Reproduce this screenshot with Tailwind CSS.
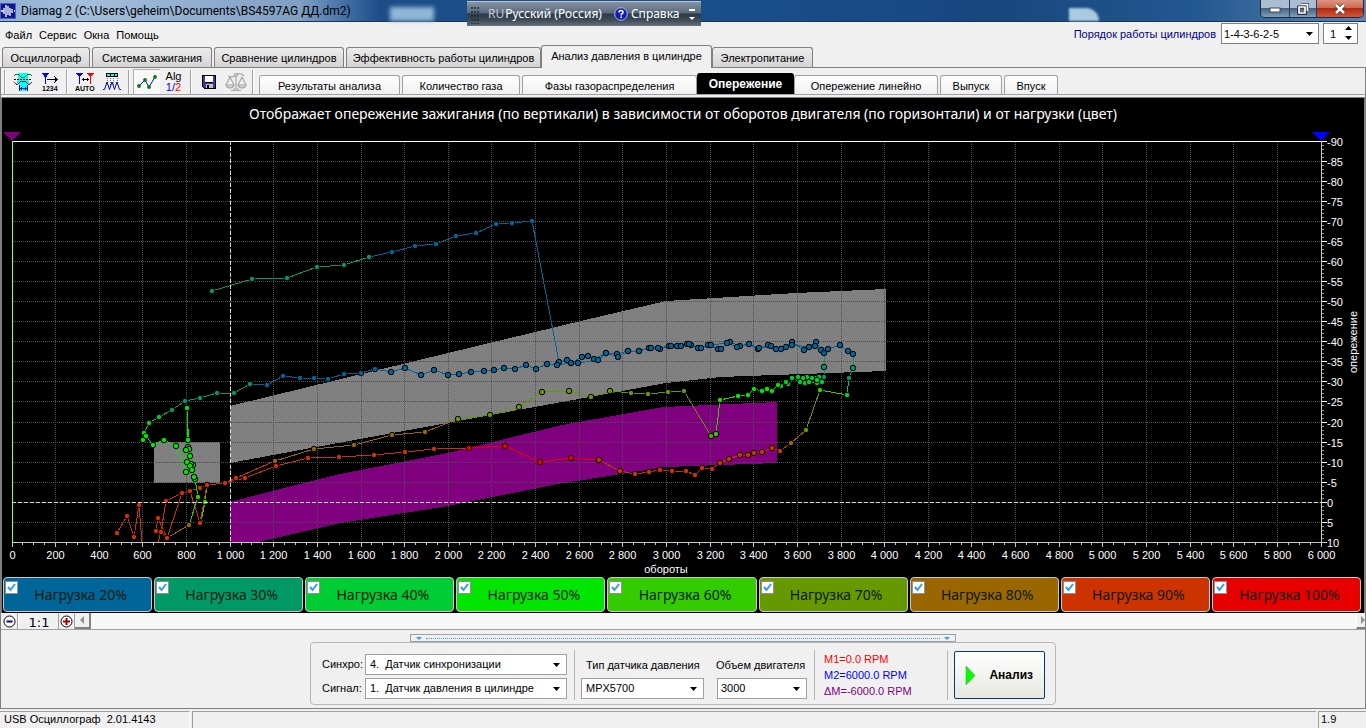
<!DOCTYPE html>
<html lang="ru">
<head>
<meta charset="utf-8">
<meta name="viewport" content="width=device-width, initial-scale=1">
<title>Diamag 2</title>
<script src="https://cdn.jsdelivr.net/npm/@tailwindcss/browser@4"></script>
</head>
<body class="min-h-screen flex flex-col bg-[#f0f0f0] text-black text-[11px] leading-4 font-['Liberation_Sans',Arial,sans-serif] overflow-x-hidden">

<!-- Title bar -->
<header class="relative h-[22px] shrink-0 flex items-center border-b border-[#1c3454] bg-[linear-gradient(90deg,#8fb0d2_0,#a4bfdb_80px,#7f9fc3_300px,#3d6ba2_350px,#1c4d87_380px,#1a4f8c_700px,#17477f_1000px,#245890_1200px,#5c86b3_1366px)]">
  <svg class="w-4 h-4 shrink-0" viewBox="0 0 16 16" aria-hidden="true"><rect width="16" height="16" fill="#10188c"/><rect x=".5" y=".5" width="15" height="15" fill="none" stroke="#4a62c8"/><path d="M1 8H4V5V11M6 8V2V14M8 3V12M10 5V13M12 6V10M14 8H15" stroke="#fff" stroke-width="1.3" fill="none"/></svg>
  <h1 class="ml-[5px] text-[12px] font-['Roboto','Noto_Sans',sans-serif] whitespace-nowrap">Diamag 2 (C:\Users\geheim\Documents\BS4597AG ДД.dm2)</h1>
  <span class="absolute left-[390px] top-[7px] w-[44px] h-[14px] bg-[#8fb6d6] blur-[2px]"></span>
  <span class="absolute left-[1069px] top-[8px] w-[30px] h-[13px] rounded-tr-full bg-[#a9cbe0] blur-[1px]"></span>
  <div class="absolute left-[467px] top-px h-[25px] w-[234px] z-10 flex items-center text-white text-[12px] font-['Noto_Sans',sans-serif] whitespace-nowrap border-t border-[#b9c4d0] bg-[linear-gradient(180deg,#8593a2_0,#5a6b7d_45%,#2b3a4a_50%,#3d4a57_75%,#66727c_100%)]">
    <svg class="ml-1 w-[9px] h-[19px]" viewBox="0 0 9 19" aria-hidden="true"><path d="M1 2V19M4 2V19M7 2V19" stroke="#1d2a38" stroke-dasharray="2 2" stroke-width="1.5"/></svg>
    <button class="ml-2 flex gap-px"><span class="text-[#c3cbd3]">RU</span><span>Русский (Россия)</span></button>
    <button class="ml-3 flex items-center gap-[3px]"><svg class="w-[14px] h-[14px]" viewBox="0 0 14 14" aria-hidden="true"><circle cx="7" cy="7" r="6.3" fill="#1420b4" stroke="#aab8e8"/><path d="M5 5.5Q5 3.5 7 3.5T9 5.3Q9 6.3 7.2 7.3V8.4M7.2 9.6V11" fill="none" stroke="#fff" stroke-width="1.5"/></svg>Справка</button>
    <button class="ml-auto mr-[6px]" aria-label="Параметры"><svg class="w-[6px] h-[14px]" viewBox="0 0 6 14" aria-hidden="true"><path d="M0 3H6" stroke="#fff" stroke-width="2"/><path d="M0 10H6L3 13Z" fill="#fff"/></svg></button>
  </div>
  <div class="absolute right-[2px] top-0 h-[18px] flex rounded-b-[5px] border border-t-0 border-[#1b2a3c] overflow-hidden">
    <button aria-label="Свернуть" class="w-[29px] flex items-center justify-center border-r border-[#2b3e55] bg-[linear-gradient(180deg,#a9bdd3_45%,#47637f_50%,#7e9fbd)]"><svg class="w-3 h-[14px]" viewBox="0 0 12 14" aria-hidden="true"><rect x="1" y="6" width="10" height="4" fill="#fff" stroke="#445"/></svg></button>
    <button aria-label="Развернуть" class="w-[27px] flex items-center justify-center border-r border-[#2b3e55] bg-[linear-gradient(180deg,#a9bdd3_45%,#47637f_50%,#7e9fbd)]"><svg class="w-3 h-3" viewBox="0 0 12 12" aria-hidden="true"><path d="M4 1H11V8M1.500 4H8.500V10.500H1.500Z" fill="none" stroke="#334" stroke-width="3"/><path d="M4 1.500H10.500V8M2 4H8V10H2Z" fill="none" stroke="#fff" stroke-width="1.700"/></svg></button>
    <button aria-label="Закрыть" class="w-[46px] flex items-center justify-center bg-[linear-gradient(180deg,#dc9482_0,#cf6a50_45%,#b02a12_50%,#d4553a)]"><svg class="w-3 h-3" viewBox="0 0 12 12" aria-hidden="true"><path d="M2 2L10 10M10 2L2 10" stroke="#433" stroke-width="4"/><path d="M2 2L10 10M10 2L2 10" stroke="#fff" stroke-width="2.500"/></svg></button>
  </div>
</header>

<!-- Menu and tabs -->
<div class="relative h-[46px] shrink-0 flex flex-col justify-between">
  <nav class="flex gap-[7px] pl-[5px] pt-[5px]">
    <button>Файл</button><button>Сервис</button><button>Окна</button><button>Помощь</button>
  </nav>
  <div class="absolute right-2 top-px flex items-center gap-1">
    <label for="order" class="text-[#000080] text-[11px] mr-px">Порядок работы цилиндров</label>
    <div class="relative">
      <select id="order" class="appearance-none block w-[98px] h-[21px] bg-white border border-[#808080] pl-[2px]"><option>1-4-3-6-2-5</option></select>
      <svg class="absolute right-[6px] top-[9px] w-[7px] h-1 pointer-events-none" viewBox="0 0 7 4" aria-hidden="true"><path d="M0 0H7L3.500 4Z"/></svg>
    </div>
    <div class="relative">
      <input aria-label="Цилиндр" value="1" class="block w-[35px] h-[21px] bg-white border border-[#808080] pl-[6px] text-[11px]">
      <button aria-label="Изменить" class="absolute right-[6px] top-[3px]"><svg class="w-[7px] h-[15px]" viewBox="0 0 7 15"><path d="M0 4H7L3.500 0ZM0 10H7L3.500 14Z"/></svg></button>
    </div>
  </div>
  <div role="tablist" class="flex items-end h-[23px] pl-[2px] gap-[2px] border-b border-[#808080] text-[11px]">
    <button role="tab" class="w-[88px] h-5 pt-px rounded-t-[3px] border border-b-0 border-[#808080] bg-linear-to-b from-[#ececec] to-[#d4d4d4] whitespace-nowrap">Осциллограф</button>
    <button role="tab" class="w-[120px] h-5 pt-px rounded-t-[3px] border border-b-0 border-[#808080] bg-linear-to-b from-[#ececec] to-[#d4d4d4] whitespace-nowrap">Система зажигания</button>
    <button role="tab" class="w-[130px] h-5 pt-px rounded-t-[3px] border border-b-0 border-[#808080] bg-linear-to-b from-[#ececec] to-[#d4d4d4] whitespace-nowrap">Сравнение цилиндров</button>
    <button role="tab" class="w-[195px] h-5 pt-px rounded-t-[3px] border border-b-0 border-[#808080] bg-linear-to-b from-[#ececec] to-[#d4d4d4] whitespace-nowrap">Эффективность работы цилиндров</button>
    <button role="tab" aria-selected="true" class="w-[171px] h-[23px] -mx-[2px] -mb-px pb-[2px] rounded-t-[3px] border border-b-0 border-[#808080] bg-[#f0f0f0] whitespace-nowrap">Анализ давления в цилиндре</button>
    <button role="tab" class="w-[101px] h-5 pt-px rounded-t-[3px] border border-b-0 border-[#808080] bg-linear-to-b from-[#ececec] to-[#d4d4d4] whitespace-nowrap">Электропитание</button>
  </div>
</div>

<main class="grow flex flex-col border-x border-b border-[#808080]">
  <!-- Toolbar -->
  <div class="h-[27px] shrink-0 flex items-end border-b border-[#a0a0a0]">
    <div class="flex h-[26px] items-center self-start pt-px">
      <i class="w-[2px] h-6 mx-[3px] border-l border-[#a0a0a0] border-r border-r-white"></i>
      <button aria-label="Фильтр" class="w-[27px] flex justify-center"><svg class="w-5 h-5" viewBox="0 0 20 20" shape-rendering="crispEdges"><path d="M5 1H15V8L17 12H14V19H6V12H3L5 8Z" fill="#0ff"/><path d="M1 4L3 2H5L8 5H12L15 2H17L19 4" fill="none" stroke="#087a08"/><path d="M1 7.500H19" stroke="#000" stroke-dasharray="2 1"/><path d="M1 10L3 12H5L8 9H12L15 12H17L19 10" fill="none" stroke="#e00000"/><path d="M6 16.500H14M6.500 13V19M14.500 13V19M8.500 15V18M12.500 15V18" stroke="#0010a0" fill="none"/></svg></button>
      <button aria-label="Нумерация" class="w-[27px] flex justify-center"><svg class="w-[18px] h-5" viewBox="0 0 18 20" shape-rendering="crispEdges"><path d="M1 1H8L4.500 6Z" fill="#00f"/><path d="M4.500 5V12" stroke="#00f"/><path d="M6 7.500H16M13 4L16 7.500L13 11" fill="none" stroke="#000"/><text x="1" y="19" font-size="7" font-family="Liberation Sans" font-weight="bold">1234</text></svg></button>
      <i class="w-[2px] h-6 mx-[3px] border-l border-[#a0a0a0] border-r border-r-white"></i>
      <button aria-label="Автомаркеры" class="w-[27px] flex justify-center"><svg class="w-5 h-5" viewBox="0 0 20 20" shape-rendering="crispEdges"><path d="M1 1H8L4.500 5Z" fill="#00f"/><path d="M4.500 4V12" stroke="#00f"/><path d="M12 1H19L15.500 5Z" fill="#f00"/><path d="M15.500 4V12" stroke="#f00"/><path d="M7 7.500H14M8.500 6V9M12.500 6V9" stroke="#000"/><text x="0" y="19" font-size="7" font-family="Liberation Sans" font-weight="bold">AUTO</text></svg></button>
      <button aria-label="Импульсы" class="w-[27px] flex justify-center"><svg class="w-5 h-5" viewBox="0 0 20 20" shape-rendering="crispEdges"><rect x="4.500" y="1.500" width="11" height="3" fill="#0ff" stroke="#000"/><path d="M8.500 2V5M12.500 2V5" stroke="#000"/><path d="M5.500 6V11M8.500 6V13M11.500 6V13M15.500 6V11" stroke="#777" stroke-dasharray="1 1"/></svg><svg class="w-5 h-5 -ml-5" viewBox="0 0 20 20"><path d="M1 17.500H2.500L5 10L7.500 17.500L10 10L12.500 17.500L15 10L17.500 17.500H19" fill="none" stroke="#0010a0"/></svg></button>
      <i class="w-[2px] h-6 mx-[3px] border-l border-[#a0a0a0] border-r border-r-white"></i>
      <button aria-label="Точки" class="w-[27px] h-[25px] flex justify-center items-center bg-[#f8f8f8] border-l border-t border-[#b0b0b0]"><svg class="w-[22px] h-5" viewBox="0 0 22 20"><path d="M3 14L9 8L13 15L19 5" fill="none" stroke="#00f"/><g fill="#087a08"><circle cx="3" cy="14" r="1.900"/><circle cx="9" cy="8" r="1.900"/><circle cx="13" cy="15" r="1.900"/><circle cx="19" cy="5" r="1.900"/></g></svg></button>
      <button class="w-[27px] flex flex-col items-center text-[11px] leading-[11px]"><span>Alg</span><span class="text-[#00f]">1/<span class="text-[#f00]">2</span></span></button>
      <i class="w-[2px] h-6 mx-[3px] border-l border-[#a0a0a0] border-r border-r-white"></i>
      <button aria-label="Сохранить" class="w-[27px] flex justify-center"><svg class="w-4 h-4" viewBox="0 0 16 16" shape-rendering="crispEdges"><path d="M1 1H15V15H3L1 13Z" fill="#000"/><path d="M2 2H4V9H12V2H14V14H3L2 13Z" fill="#3c3c96"/><rect x="4" y="2" width="8" height="6" fill="#fff"/><rect x="5" y="10" width="7" height="4" fill="#c0c0c0"/><rect x="6" y="11" width="2" height="3" fill="#000"/></svg></button>
      <button aria-label="Сравнить" class="w-[27px] flex justify-center"><svg class="w-[22px] h-5" viewBox="0 0 22 20" fill="none" stroke="#a8a8a8" stroke-width="1.200"><path d="M11 1V17M3 4Q7 6 11 3T19 4M6 18.500H16M8 17H14"/><path d="M5 5L1 13M5 5L9 13M17 5L13 13M17 5L21 13"/><path d="M1 13H9Q8 16 5 16T1 13ZM13 13H21Q20 16 17 16T13 13Z" fill="#d4d4d4"/><circle cx="11" cy="3" r="1.500" fill="#d4d4d4"/></svg></button>
      <i class="w-[2px] h-6 mx-[3px] border-l border-[#a0a0a0] border-r border-r-white"></i>
    </div>
    <div role="tablist" class="flex items-end gap-[2px] h-[21px] ml-[2px] text-[11px]">
      <button role="tab" class="w-[141px] h-[19px] pt-px rounded-t-[3px] border border-b-0 border-[#a0a0a0] bg-linear-to-b from-white to-[#f0f0f0]">Результаты анализа</button>
      <button role="tab" class="w-[118px] h-[19px] pt-px rounded-t-[3px] border border-b-0 border-[#a0a0a0] bg-linear-to-b from-white to-[#f0f0f0]">Количество газа</button>
      <button role="tab" class="w-[175px] h-[19px] pt-px rounded-t-[3px] border border-b-0 border-[#a0a0a0] bg-linear-to-b from-white to-[#f0f0f0]">Фазы газораспределения</button>
      <button role="tab" aria-selected="true" class="w-[97px] h-[21px] -mx-[2px] rounded-t-[3px] bg-black text-white text-[12px] font-bold">Опережение</button>
      <button role="tab" class="w-[144px] h-[19px] pt-px rounded-t-[3px] border border-b-0 border-[#a0a0a0] bg-linear-to-b from-white to-[#f0f0f0]">Опережение линейно</button>
      <button role="tab" class="w-[62px] h-[19px] pt-px rounded-t-[3px] border border-b-0 border-[#a0a0a0] bg-linear-to-b from-white to-[#f0f0f0]">Выпуск</button>
      <button role="tab" class="w-[54px] h-[19px] pt-px rounded-t-[3px] border border-b-0 border-[#a0a0a0] bg-linear-to-b from-white to-[#f0f0f0]">Впуск</button>
    </div>
  </div>

  <!-- Chart -->
  <section class="mt-[2px] border-t border-x border-[#808080] bg-black shrink-0">
    <svg id="chart" class="block w-full h-auto" viewBox="2 98 1362 479" font-family="Liberation Sans, Arial, sans-serif" font-size="11" fill="#fff" role="img" aria-label="Опережение зажигания">
      <text x="683" y="119" text-anchor="middle" font-size="14" font-family="Noto Sans, Verdana, sans-serif">Отображает опережение зажигания (по вертикали) в зависимости от оборотов двигателя (по горизонтали) и от нагрузки (цвет)</text>
      <g shape-rendering="crispEdges">
        <path fill="#808080" d="M230 406L448 353L585 320L666 301L796 293L886 289V371L720 377L666 383L540 406L300 450L230 463ZM154 442H220V483H154Z"/>
        <path fill="#800080" d="M230 502L300 484L340 474L448 453L562 425L664 407L777 402V463L665 467L557 484L448 506L340 523L258 542H230Z"/>
      </g>
      <g id="grid" shape-rendering="crispEdges" stroke-width="1"></g>
      <g id="lines" shape-rendering="crispEdges" fill="none"></g>
      <g id="dots" stroke="#000"></g>
      <g shape-rendering="crispEdges" fill="none">
        <path d="M12 502.500H1321M230.500 141V542" stroke="#d8d8d8" stroke-dasharray="4 2"/>
        <path d="M12 141.500H1326" stroke="#fff"/>
        <path d="M12 542.500H1326" stroke="#c8c8c8"/>
        <path d="M12.500 141V543" stroke="#80ff80"/>
        <path d="M1321.500 141V543" stroke="#d0d080"/>
      </g>
      <path d="M3 132H21L12 141Z" fill="#800080"/>
      <path d="M1312 132H1330L1321 141Z" fill="#00f"/>
      <g id="labels"></g>
      <text x="666" y="573" text-anchor="middle">обороты</text>
      <text transform="translate(1357 342) rotate(-90)" text-anchor="middle">опережение</text>
    </svg>
    <!-- Load legend -->
    <div id="legend" class="grid grid-cols-9 gap-[2px] pl-px pr-[3px] pb-px text-[14px] font-['Noto_Sans',Verdana,sans-serif]"></div>
  </section>

  <!-- Zoom strip -->
  <div class="h-[17px] shrink-0 flex border-b border-[#a0a0a0] bg-[#f7f7f7]">
    <button aria-label="Уменьшить" class="w-[17px] flex items-center justify-center bg-[#f0f0f0] border-r border-[#a0a0a0]"><svg class="w-[13px] h-[13px]" viewBox="0 0 13 13"><circle cx="6.500" cy="6.500" r="5.500" fill="#fff" stroke="#000"/><path d="M3.500 6.500H9.500" stroke="#000080" stroke-width="2"/></svg></button>
    <button class="w-[41px] pl-px pt-[2px] bg-[#f0f0f0] border-x border-[#a0a0a0] border-l-white text-[13px] leading-4 font-['DejaVu_Sans',Verdana,sans-serif]">1:1</button>
    <button aria-label="Увеличить" class="w-[16px] flex items-center justify-center bg-[#f0f0f0] border-r border-[#a0a0a0]"><svg class="w-[13px] h-[13px]" viewBox="0 0 13 13"><circle cx="6.500" cy="6.500" r="5.500" fill="#fff" stroke="#000"/><path d="M3 6.500H10M6.500 3V10" stroke="#a00000" stroke-width="2"/></svg></button>
    <button aria-label="Влево" class="w-4 flex items-center justify-center bg-[#f0f0f0] border-r-2 border-b-2 border-[#808080]"><svg class="w-1 h-2" viewBox="0 0 4 8"><path d="M4 0V8L0 4Z" fill="#909090"/></svg></button>
    <button aria-label="Вправо" class="ml-auto w-[9px] flex items-center justify-end bg-[#f0f0f0] border-b-2 border-l border-[#808080] border-l-white"><svg class="w-1 h-2" viewBox="0 0 4 8"><path d="M0 0V8L4 4Z" fill="#909090"/></svg></button>
  </div>

  <!-- Settings -->
  <div class="pt-1 pb-[2px]">
    <div class="mx-auto w-[546px] h-[8px] flex items-center justify-between px-[5px] border border-[#a0a0a0]">
      <svg class="w-[6px] h-[3px]" viewBox="0 0 6 3"><path d="M0 0H6L3 3Z" fill="#3399ff"/></svg>
      <i class="grow mx-1 border-t border-dotted border-[#3399ff]"></i>
      <svg class="w-[6px] h-[3px]" viewBox="0 0 6 3"><path d="M0 0H6L3 3Z" fill="#3399ff"/></svg>
    </div>
    <div class="mx-auto w-[746px] h-[63px] flex items-center rounded border border-[#b8b8b8] pl-[11px] pr-[10px] pt-[3px]">
      <div class="grid grid-cols-[43px_202px] gap-y-[3px] items-center pt-[2px]">
        <label for="sync">Синхро:</label>
        <div class="relative"><select id="sync" class="appearance-none block w-full h-[21px] bg-white border border-[#a0a0a0] pl-[4px] text-[11px]"><option>4.&nbsp; Датчик синхронизации</option></select><svg class="absolute right-[7px] top-[9px] w-[7px] h-1 pointer-events-none" viewBox="0 0 7 4"><path d="M0 0H7L3.500 4Z"/></svg></div>
        <label for="sig">Сигнал:</label>
        <div class="relative"><select id="sig" class="appearance-none block w-full h-[21px] bg-white border border-[#a0a0a0] pl-[4px] text-[11px]"><option>1.&nbsp; Датчик давления в цилиндре</option></select><svg class="absolute right-[7px] top-[9px] w-[7px] h-1 pointer-events-none" viewBox="0 0 7 4"><path d="M0 0H7L3.500 4Z"/></svg></div>
      </div>
      <i class="w-px h-[50px] mx-[6px] ml-[7px] bg-[#b8b8b8]"></i>
      <div class="w-[123px] flex flex-col gap-[5px] pt-[5px]">
        <label for="sensor" class="pl-[5px] whitespace-nowrap">Тип датчика давления</label>
        <div class="relative"><select id="sensor" class="appearance-none block w-full h-[21px] bg-white border border-[#a0a0a0] pl-1 text-[11px]"><option>MPX5700</option></select><svg class="absolute right-[7px] top-[9px] w-[7px] h-1 pointer-events-none" viewBox="0 0 7 4"><path d="M0 0H7L3.500 4Z"/></svg></div>
      </div>
      <div class="w-[90px] ml-[13px] flex flex-col gap-[5px] pt-[5px]">
        <label for="vol" class="-ml-px whitespace-nowrap">Объем двигателя</label>
        <div class="relative"><select id="vol" class="appearance-none block w-full h-[21px] bg-white border border-[#a0a0a0] pl-[3px] text-[11px]"><option>3000</option></select><svg class="absolute right-[7px] top-[9px] w-[7px] h-1 pointer-events-none" viewBox="0 0 7 4"><path d="M0 0H7L3.500 4Z"/></svg></div>
      </div>
      <i class="w-px h-[50px] ml-[7px] mr-[9px] bg-[#b8b8b8]"></i>
      <div class="whitespace-nowrap">
        <p class="text-[#f00]">M1=0.0 RPM</p><p class="text-[#00f]">M2=6000.0 RPM</p><p class="text-[#800080]">ΔM=-6000.0 RPM</p>
      </div>
      <i class="w-px h-[50px] ml-auto mr-[6px] bg-[#b8b8b8]"></i>
      <button class="w-[91px] h-[48px] flex items-center justify-between pl-[10px] pr-[11px] rounded-[2px] border border-[#003c74] bg-linear-to-b from-white to-[#e8e8e0] font-bold text-[12px]">
        <svg class="w-[11px] h-[19px]" viewBox="0 0 11 19"><path d="M1 0V19L10 9.500Z" fill="#0f0" stroke="#60a060" stroke-width=".6"/></svg>Анализ
      </button>
    </div>
  </div>
</main>

<!-- Status bar -->
<footer class="h-[17px] mt-[2px] shrink-0 flex gap-[2px] text-[11px] leading-[15px]">
  <div class="w-[190px] pl-1 border-t border-r border-[#a0a0a0] border-r-white">USB Осциллограф&nbsp; 2.01.4143</div>
  <div class="grow border-t border-l border-[#a0a0a0]"></div>
  <div class="w-[48px] pl-[2px] border-t border-l border-[#a0a0a0]">1.9</div>
</footer>

<template id="load">
  <label class="relative h-[35px] flex items-center justify-center pl-[6px] rounded border border-[#c8c8c8] text-[#0a1a10]">
    <input type="checkbox" checked class="peer absolute left-px top-[3px] w-[13px] h-[13px] appearance-none bg-white border border-[#909090]">
    <svg class="absolute left-[3px] top-[5px] w-[9px] h-[9px] hidden peer-checked:block" viewBox="0 0 9 9"><path d="M1 4L3.500 7L8 1" fill="none" stroke="#3399ff" stroke-width="2"/></svg>
    <span></span>
  </label>
</template>

<script>
const NS = 'http://www.w3.org/2000/svg';
const $ = id => document.getElementById(id);
function add(parent, tag, attrs, text) {
  const e = document.createElementNS(NS, tag);
  for (const k in attrs) e.setAttribute(k, attrs[k]);
  if (text !== undefined) e.textContent = text;
  $(parent).appendChild(e);
}
const loads = {20:'#006699',30:'#009966',40:'#00cc33',50:'#00e600',60:'#33cc00',70:'#669900',80:'#996600',90:'#cc3300',100:'#e60000'};

// Grid, ticks and axis labels
for (let r = 0; r <= 6000; r += 50) {
  const x = Math.floor(12 + r * 1309 / 6000) + .5;
  add('grid', 'path', {d: `M${x} 543V${r % 200 ? 545 : 547}`, stroke: '#c8c8c8'});
  if (r % 200) continue;
  if (r) add('grid', 'path', {d: `M${x} 142V542`, stroke: '#505050', 'stroke-dasharray': '1 1'});
  add('labels', 'text', {x, y: 559, 'text-anchor': 'middle'}, r < 1000 ? r : (r / 1000 | 0) + ' ' + String(r % 1000).padStart(3, '0'));
}
for (let a = -90; a <= 10; a++) {
  const y = Math.floor(141 + (a + 90) * 4.015) + .5;
  if (a % 5) { add('grid', 'path', {d: `M1322 ${y}H1324`, stroke: '#909090'}); continue; }
  add('grid', 'path', {d: `M1322 ${y}H1327`, stroke: '#fff'});
  add('grid', 'path', {d: `M13 ${y}H1321`, stroke: '#505050', 'stroke-dasharray': '1 1'});
  add('labels', 'text', {x: 1327, y: y + 4}, a);
}

// Traces: a number followed by ":" sets the load level for the points after it
const traces = [
  '60: 207,485 205,502 201,522',
  '30: 212,291 252,279 287,278 317,267 344,265 369,257 20: 392,252 415,246 436,244 456,236 476,233 496,224 512,223 532,221 559,362 567,360 571,363 582,357 588,356 594,359 606,353 617,354 628,351 639,351 649,348 660,349 669,346 677,346 687,344 691,345 698,348 708,345 718,349 721,349 730,342 740,346 749,344 758,349 768,345 776,349 786,347 792,342 804,350 816,342 821,350 824,353 30: 824,367 824,377 40: 819,377 815,378 812,378 807,377 803,378 798,377 794,378 792,378',
  '40: 792,378 800,382 805,383 809,382 817,383 822,382 817,380 798,377 788,384 786,382 781,386 50: 778,385 772,391 767,389 762,391 754,389 748,395 738,396 60: 720,400 716,434 70: 711,436 684,391 668,392 648,394 631,393 610,391 591,397 569,391 542,392 519,407 490,415 458,419 80: 425,432 392,435 354,445 314,449 275,461 90: 236,478 225,483',
  '50: 143,440 144,433 40: 149,423 159,417 30: 172,410 185,401 200,398 217,393 234,393 250,384 20: 267,385 283,376 300,378 314,378 328,379 344,374 361,373 375,369 391,372 405,368 421,375 434,370 448,375 459,374 471,372 484,371 494,370 504,368 515,369 526,365 536,369 547,364 557,365 571,363 578,363 598,360 606,353 618,357 628,351 639,351 651,348 658,348 671,346 681,346 689,344 701,348 711,345 727,343 737,347 749,344 759,348 771,346 781,349 792,345 809,347 815,346 828,349 840,345 848,351 853,354 30: 853,368 849,378 40: 847,395 60: 820,390 70: 806,430 80: 791,443 90: 780,451 772,448 762,452 754,453 748,455 740,455 729,459 720,463 712,469 702,468 695,475 686,471 672,471 660,470 649,472 635,474 620,471 599,460 100: 571,458 540,462 505,446 469,448 90: 434,449 405,452 374,455 339,457 308,458 276,466 245,478 225,483 207,485 200,488 190,491 182,493 166,501 161,532',
  '90: 207,485 200,523 190,491',
  '90: 182,493 167,538 158,518 156,531',
  '90: 167,538 161,532 158,542',
  '90: 117,533 127,516 134,537 139,505 142,542',
  '90: 167,538 80: 189,525 60: 198,497 50: 195,479 194,477 193,465 191,464 190,456 188,447 189,449 40: 187,408 50: 189,449 186,450 187,462 190,466 192,470',
  '50: 143,440 146,436 153,445 164,440 176,446 186,472 188,440 187,408'
];
for (const t of traces) {
  let c, prev;
  for (const tok of t.split(' ')) {
    if (tok.endsWith(':')) { c = loads[parseInt(tok)]; continue; }
    const [x, y] = tok.split(',').map(Number);
    if (prev) add('lines', 'path', {d: `M${prev[0]} ${prev[1]}L${x} ${y}`, stroke: c});
    if (y < 541) add('dots', 'circle', {cx: x, cy: y, r: 2.75, fill: c});
    prev = [x, y];
  }
}

for (const n in loads) {
  const b = $('load').content.cloneNode(true);
  b.querySelector('label').style.backgroundColor = loads[n];
  b.querySelector('span').textContent = `Нагрузка ${n}%`;
  $('legend').appendChild(b);
}
</script>
</body>
</html>
